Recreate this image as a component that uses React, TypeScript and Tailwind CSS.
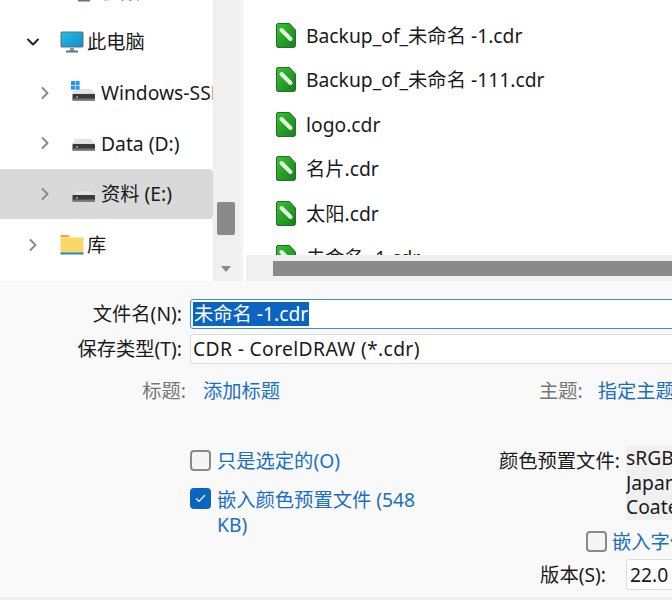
import React from 'react';
import { ChevronDown, ChevronRight } from 'lucide-react';

const FONT = 'font-["Noto_Sans","Noto_Sans_CJK_SC",sans-serif]';

function MonitorIcon() {
    return (
        <svg width="24" height="22" viewBox="0 0 24 22" className="shrink-0">
            <defs>
                <linearGradient id="screen" x1="0" y1="0" x2="1" y2="1">
                    <stop offset="0" stopColor="#1cc4e4" />
                    <stop offset="1" stopColor="#1a86d0" />
                </linearGradient>
            </defs>
            <rect x="0.5" y="0.5" width="23" height="16" rx="1.5" fill="#5f6e78" />
            <rect x="1.5" y="1.5" width="21" height="14" fill="url(#screen)" />
            <rect x="10" y="17" width="4" height="3" fill="#8a9aa4" />
            <rect x="6" y="19.5" width="12" height="2" rx="0.5" fill="#5f7480" />
        </svg>
    );
}

function DriveIcon({ windows = false }: { windows?: boolean }) {
    return (
        <svg width="24" height="22" viewBox="0 0 24 22" className="shrink-0 overflow-visible">
            <path d="M3.5 7.5 H19 L23 12 H0.5 Z" fill="#e4e4e4" stroke="#c8c8c8" strokeWidth="0.5" />
            <rect x="0.5" y="12" width="22.5" height="6.5" rx="0.8" fill="#3a3a3a" />
            <rect x="0.5" y="16.5" width="22.5" height="2" fill="#777" />
            <rect x="4" y="14" width="2" height="2" fill="#3fc04f" />
            {windows && (
                <g fill="#1a9af0">
                    <rect x="-1" y="-1" width="4" height="4" />
                    <rect x="3.6" y="-1" width="4" height="4" />
                    <rect x="-1" y="3.6" width="4" height="4" />
                    <rect x="3.6" y="3.6" width="4" height="4" />
                </g>
            )}
        </svg>
    );
}

function FolderIcon() {
    return (
        <svg width="24" height="21" viewBox="0 0 24 21" className="shrink-0">
            <path d="M0.5 2 Q0.5 1 1.5 1 H8 L10.5 3.5 H0.5 Z" fill="#f0a818" />
            <rect x="0.5" y="3" width="23" height="16" fill="#fbd865" />
            <rect x="0.5" y="3" width="23" height="1" fill="#fde9a0" />
            <rect x="0.5" y="18.5" width="23" height="2" fill="#1c86d8" />
        </svg>
    );
}

function CdrIcon() {
    return (
        <svg width="20" height="25" viewBox="0 0 20 25" className="shrink-0">
            <defs>
                <linearGradient id="cdr" x1="0" y1="0" x2="1" y2="1">
                    <stop offset="0" stopColor="#38c42e" />
                    <stop offset="1" stopColor="#14801c" />
                </linearGradient>
            </defs>
            <path d="M2 0.5 H13.5 L19.5 7 V22.5 Q19.5 24.5 17.5 24.5 H2 Q0.5 24.5 0.5 22.5 V2 Q0.5 0.5 2 0.5 Z" fill="url(#cdr)" stroke="#2a6a30" />
            <path d="M5.5 7 L14.5 16" stroke="#e8f1e6" strokeWidth="4" strokeLinecap="round" />
        </svg>
    );
}

function NavRow({ indent, open, icon, label, selected, tight }: { indent: string; open?: boolean; icon: React.ReactNode; label: string; selected?: boolean; tight?: boolean }) {
    return (
        <div className={`flex h-[50.7px] shrink-0 items-center overflow-hidden rounded-r-sm ${indent} ${selected ? 'bg-[#d9d9d9]' : ''}`}>
            {open ? (
                <ChevronDown size={20} strokeWidth={2.4} className="w-[22px] shrink-0 text-[#222]" />
            ) : (
                <ChevronRight size={20} strokeWidth={2.4} className="w-[22px] shrink-0 text-[#8a8a8a]" />
            )}
            <span className="ml-[16px]">{icon}</span>
            <span className={`whitespace-nowrap ${tight ? 'ml-[3px]' : 'ml-[5px]'}`}>{label}</span>
        </div>
    );
}

function FileRow({ name }: { name: string }) {
    return (
        <div className="flex h-[44.5px] shrink-0 items-center">
            <CdrIcon />
            <span className="ml-[10px] whitespace-pre">{name}</span>
        </div>
    );
}

function Box({ children, selected }: { children: React.ReactNode; selected?: boolean }) {
    return (
        <div className={`-mr-[10px] flex h-[30px] flex-1 items-center rounded-[3px] border bg-white pl-[2px] ${selected ? 'border-[#3b8fd8]' : 'border-[#dcdcdc]'}`}>
            {children}
        </div>
    );
}

export default function App() {
    return (
        <div className={`flex h-[600px] w-[672px] flex-col overflow-hidden border-b-[3px] border-[#f0f0f0] bg-[#f9f9f9] text-[19.3px] leading-none text-[#1a1a1a] ${FONT}`}>
            {/* Top: nav tree and file list */}
            <div className="flex h-[281px] shrink-0 bg-white">
                <div className="w-[213px] shrink-0 overflow-hidden">
                    <div className="-mt-[34px] flex flex-col">
                        <NavRow indent="pl-[34px]" icon={<MonitorIcon />} label="视频" />
                        <NavRow indent="pl-[22px]" open tight icon={<MonitorIcon />} label="此电脑" />
                        <NavRow indent="pl-[34px]" icon={<DriveIcon windows />} label="Windows-SSD" />
                        <NavRow indent="pl-[34px]" icon={<DriveIcon />} label="Data (D:)" />
                        <NavRow indent="pl-[34px]" selected icon={<DriveIcon />} label="资料 (E:)" />
                        <NavRow indent="pl-[22px]" tight icon={<FolderIcon />} label="库" />
                    </div>
                </div>
                {/* vertical scrollbar */}
                <div className="flex w-[27px] shrink-0 flex-col items-center bg-[#f0f0f0] pr-[1px] pt-[202px]">
                    <div className="h-[33px] w-[18px] rounded-[2px] bg-[#8a8a8a]" />
                    <div className="mt-[31px] h-0 w-0 border-x-[5px] border-t-[6px] border-x-transparent border-t-[#8a8a8a]" />
                </div>
                <div className="flex min-w-0 flex-1 flex-col border-l-[3px] border-[#f5f5f5]">
                    <div className="h-[255px] overflow-hidden pl-[33px] pt-[13px]">
                        <FileRow name="Backup_of_未命名 -1.cdr" />
                        <FileRow name="Backup_of_未命名 -111.cdr" />
                        <FileRow name="logo.cdr" />
                        <FileRow name="名片.cdr" />
                        <FileRow name="太阳.cdr" />
                        <FileRow name="未命名 -1.cdr" />
                    </div>
                    <div className="ml-[3px] flex h-[26px] items-center bg-[#f0f0f0] pl-[27px]">
                        <div className="h-[15px] flex-1 bg-[#8a8a8a]" />
                    </div>
                </div>
            </div>

            {/* Bottom: save options */}
            <div className="flex flex-1 flex-col pt-[18px]">
                <div className="flex items-center">
                    <span className="w-[182px] shrink-0 whitespace-nowrap text-right">文件名(N):</span>
                    <div className="ml-[8px] flex flex-1">
                        <Box selected>
                            <span className="bg-[#0b64c0] px-px py-[2px] text-white">未命名 -1.cdr</span>
                        </Box>
                    </div>
                </div>
                <div className="mt-[5px] flex items-center">
                    <span className="w-[182px] shrink-0 whitespace-nowrap text-right">保存类型(T):</span>
                    <div className="ml-[8px] flex flex-1">
                        <Box><span className="tracking-[0.35px]">CDR - CorelDRAW (*.cdr)</span></Box>
                    </div>
                </div>
                <div className="mt-[17px] flex items-center whitespace-nowrap">
                    <span className="w-[186px] shrink-0 text-right text-[#767676]">标题:</span>
                    <span className="ml-[17px] w-[336px] shrink-0 text-[#1a6fc4]">添加标题</span>
                    <span className="text-[#767676]">主题:</span>
                    <span className="ml-[15px] text-[#1a6fc4]">指定主题</span>
                </div>

                <div className="mt-[46px] flex">
                    <div className="ml-[190px] w-[300px] shrink-0 text-[#1a6fc4]">
                        <div className="mt-[4px] flex items-center">
                            <span className="h-[21px] w-[21px] shrink-0 rounded-[4px] border-2 border-[#8a8a8a] bg-[#f5f5f5]" />
                            <span className="ml-[6px] whitespace-nowrap">只是选定的(O)</span>
                        </div>
                        <div className="mt-[17px] flex">
                            <span className="flex h-[21px] w-[21px] shrink-0 items-center justify-center rounded-[4px] bg-[#0b64c0]">
                                <svg width="11" height="9" viewBox="0 0 11 9" fill="none">
                                    <path d="M1 4.5 L4 7.5 L10 1" stroke="#fff" strokeWidth="1.2" />
                                </svg>
                            </span>
                            <span className="ml-[6px] w-[205px] leading-[24.5px]">嵌入颜色预置文件 (548 KB)</span>
                        </div>
                    </div>
                    <div className="min-w-0 flex-1">
                        <div className="flex">
                            <span className="ml-[9px] mt-[5px] w-[119px] shrink-0 whitespace-nowrap">颜色预置文件:</span>
                            <div className="-mr-[10px] ml-[8px] flex h-[74px] flex-1 flex-col overflow-hidden bg-[#f0f0f0] leading-[24.5px] whitespace-nowrap">
                                <span>sRGB IEC61966</span>
                                <span>Japan Color</span>
                                <span>Coated FOGRA</span>
                            </div>
                        </div>
                        <div className="ml-[96px] mt-[11px] flex items-center whitespace-nowrap text-[#1a6fc4]">
                            <span className="h-[21px] w-[21px] shrink-0 rounded-[4px] border-2 border-[#8a8a8a] bg-[#f5f5f5]" />
                            <span className="ml-[5px]">嵌入字体</span>
                        </div>
                        <div className="mt-[7px] flex items-center">
                            <span className="w-[116px] shrink-0 whitespace-nowrap text-right">版本(S):</span>
                            <div className="-mr-[10px] ml-[20px] flex h-[31px] flex-1 items-center rounded-[3px] border border-[#dcdcdc] bg-white pl-[3px]">22.0</div>
                        </div>
                    </div>
                </div>
            </div>
        </div>
    );
}
